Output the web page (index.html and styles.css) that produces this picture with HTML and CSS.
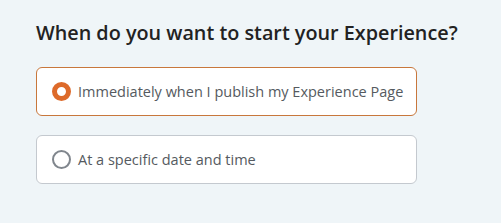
FILE: index.html
```html
<!DOCTYPE html>
<html lang="en">
<head>
    <meta charset="UTF-8">
    <title>Start your Experience</title>
    <link rel="stylesheet" href="styles.css">
</head>
<body>
    <div class="panel">
        <h2 class="question">When do you want to start your Experience?</h2>
        <div class="options">
            <label class="option selected">
                <input type="radio" name="start" checked>
                <span class="dot"></span>
                <span>Immediately when I publish my Experience Page</span>
            </label>
            <label class="option">
                <input type="radio" name="start">
                <span class="dot"></span>
                <span>At a specific date and time</span>
            </label>
        </div>
    </div>
</body>
</html>
```

FILE: styles.css
```css
body {
    margin: 0;
    background: #eff5f8;
    font-family: 'Open Sans', 'Liberation Sans', sans-serif;
}

.panel {
    padding: 19px 36px 0;
}

.question {
    margin: 0 0 20px;
    font-size: 19.8px;
    font-weight: 600;
    color: #222;
    line-height: 28px;
}

.options {
    display: flex;
    flex-direction: column;
    gap: 19px;
    width: 381px;
}

.option {
    display: flex;
    align-items: center;
    gap: 7px;
    height: 49px;
    box-sizing: border-box;
    padding: 0 10px 0 15px;
    background: white;
    border: 1px solid #c4c9cf;
    border-radius: 6px;
    font-size: 14.5px;
    color: #555a60;
    white-space: nowrap;
    cursor: pointer;
}

.option.selected {
    border-color: #c8773c;
}

.option input {
    display: none;
}

.dot {
    width: 19px;
    height: 19px;
    box-sizing: border-box;
    border: 2px solid #80868d;
    border-radius: 50%;
    flex-shrink: 0;
}

.option.selected .dot {
    border: 5px solid #dd6a2a;
}
```
